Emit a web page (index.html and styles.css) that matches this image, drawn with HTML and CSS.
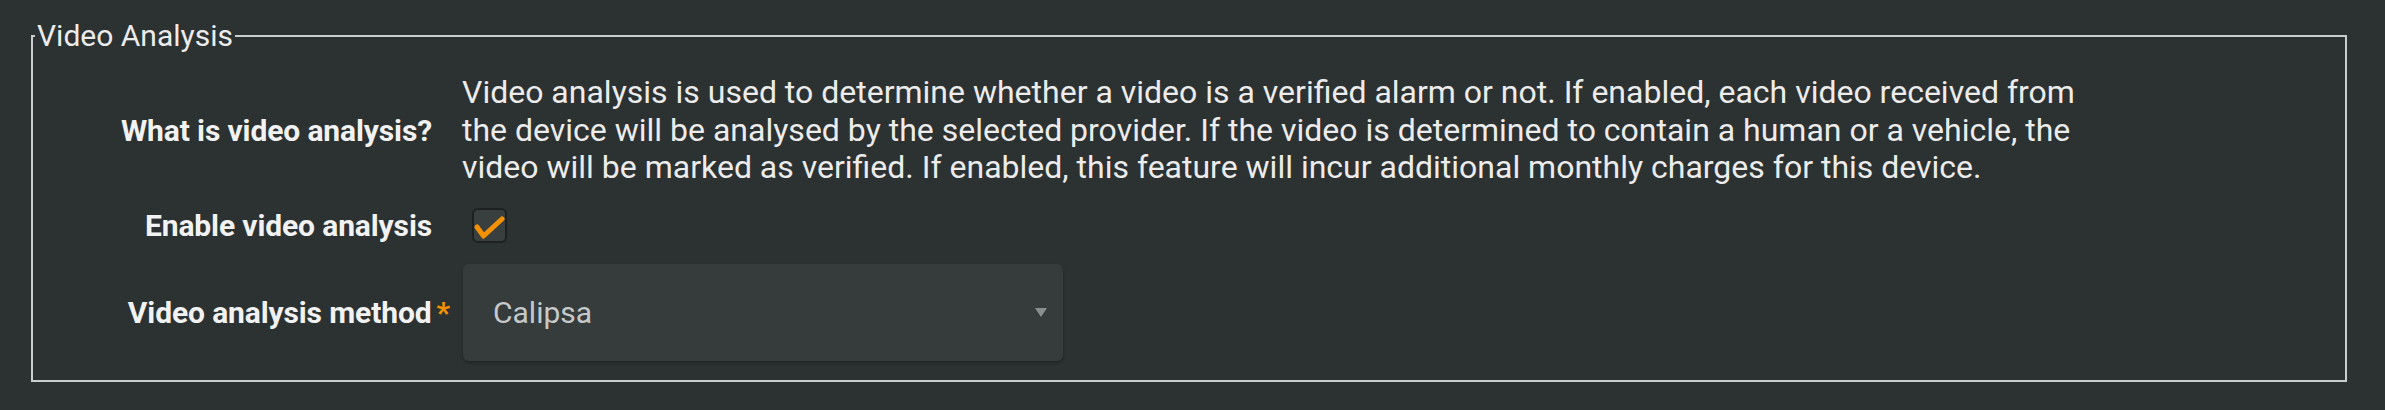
FILE: index.html
```html
<!DOCTYPE html>
<html lang="en">
<head>
    <meta charset="UTF-8">
    <meta name="viewport" content="width=device-width, initial-scale=1.0">
    <title>Video Analysis</title>
    <link rel="stylesheet" href="styles.css">
</head>
<body>
    <fieldset class="panel">
        <legend>Video Analysis</legend>

        <div class="form-grid">
            <div class="field-label">What is video analysis?</div>
            <p class="field-help">Video analysis is used to determine whether a video is a verified alarm or not. If enabled, each video received from the device will be analysed by the selected provider. If the video is determined to contain a human or a vehicle, the video will be marked as verified. If enabled, this feature will incur additional monthly charges for this device.</p>

            <div class="field-label">Enable video analysis</div>
            <div class="field-value">
                <span class="checkbox">
                    <svg viewBox="0 0 31 31" width="31" height="31">
                        <polyline points="3,17 9.5,26 28,9" fill="none" stroke="#f39200" stroke-width="5" stroke-linecap="round" stroke-linejoin="round"/>
                    </svg>
                </span>
            </div>

            <div class="field-label">Video analysis method<span class="req">*</span></div>
            <div class="field-value">
                <div class="select">
                    <span class="select-text">Calipsa</span>
                    <span class="select-arrow"></span>
                </div>
            </div>
        </div>
    </fieldset>
</body>
</html>
```

FILE: styles.css
```css
body {
    margin: 0;
    padding: 0;
    background-color: #2c3132;
    font-family: Roboto, "Liberation Sans", sans-serif;
    color: #eeeeee;
}

.panel {
    margin: 18px 38px 0 31px;
    padding: 21px 19px 19px 19px;
    border: 2px solid #c9cdcd;
}

.panel legend {
    padding: 0 2px;
    margin-left: -17px;
    font-size: 30px;
    color: #ececec;
}

.form-grid {
    display: grid;
    grid-template-columns: 380px 1fr;
    column-gap: 30px;
    row-gap: 21px;
    align-items: center;
}

.field-label {
    text-align: right;
    font-size: 30px;
    font-weight: bold;
    letter-spacing: -0.12px;
    color: #f2f2f2;
}

.req {
    color: #f39200;
    margin-left: 5px;
    margin-right: -18px;
}

.field-help {
    margin: 0;
    max-width: 1650px;
    font-size: 32px;
    line-height: 37.5px;
    color: #ececec;
}

.checkbox {
    display: block;
    width: 31px;
    height: 31px;
    margin-left: 10px;
    background: #393e3f;
    border: 2px solid #1d2121;
    border-radius: 6px;
}

.checkbox svg {
    display: block;
}

.select {
    display: flex;
    align-items: center;
    justify-content: space-between;
    width: 600px;
    height: 97px;
    margin-left: 1px;
    padding: 0 16px 0 30px;
    box-sizing: border-box;
    background: #363b3c;
    border-radius: 6px;
    box-shadow: 0 2px 3px rgba(0, 0, 0, 0.25);
}

.select-text {
    font-size: 30px;
    color: #c6c9c9;
}

.select-arrow {
    width: 0;
    height: 0;
    border-left: 6px solid transparent;
    border-right: 6px solid transparent;
    border-top: 9px solid #8b8f90;
}
```
